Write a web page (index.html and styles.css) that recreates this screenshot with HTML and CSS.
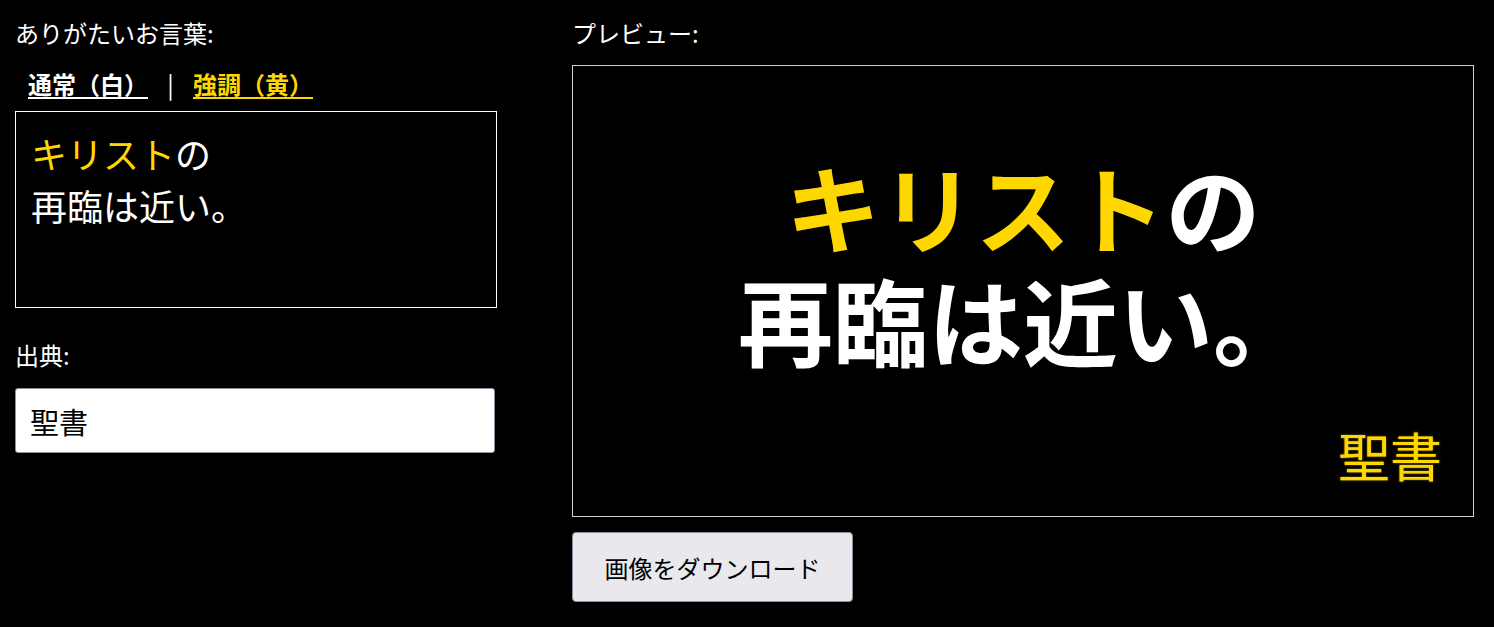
FILE: index.html
```html
<!DOCTYPE html>
<html lang="ja">
<head>
<meta charset="utf-8">
<title>ありがたいお言葉</title>
<link rel="stylesheet" href="styles.css">
</head>
<body>
<div class="app">
  <section class="editor">
    <div class="label">ありがたいお言葉:</div>
    <div class="tabs">
      <span class="tab tab-white">通常（白）</span>
      <span class="sep">|</span>
      <span class="tab tab-yellow">強調（黄）</span>
    </div>
    <div class="quote-box" contenteditable="true"><span class="hl">キリスト</span>の<br>再臨は近い。</div>
    <div class="label label-source">出典:</div>
    <input class="source-input" type="text" value="聖書">
  </section>
  <section class="preview-col">
    <div class="label label-preview">プレビュー:</div>
    <div class="preview">
      <div class="preview-text">
        <div class="line"><span class="hl">キリスト</span>の</div>
        <div class="line">再臨は近い。</div>
      </div>
      <div class="preview-source">聖書</div>
    </div>
    <button class="download" type="button">画像をダウンロード</button>
  </section>
</div>
</body>
</html>
```
FILE: styles.css
```css
html, body {
  margin: 0;
  padding: 0;
  background: #000;
}
body {
  color: #fff;
  font-family: "Noto Sans CJK JP", "Noto Sans", sans-serif;
  font-size: 24px;
}
.app {
  display: flex;
  gap: 75px;
  padding: 15px;
  align-items: flex-start;
}
.editor {
  width: 482px;
  display: flex;
  flex-direction: column;
}
.label {
  line-height: 35px;
  margin-bottom: 16px;
}
.tabs {
  display: flex;
  align-items: center;
  line-height: 35px;
  margin-bottom: 10px;
  padding-left: 13px;
}
.tab {
  font-weight: bold;
  text-decoration: underline;
  text-underline-offset: 3px;
  cursor: pointer;
}
.tab-white { color: #fff; }
.tab-yellow { color: #ffd700; }
.sep {
  width: 45px;
  text-align: center;
  color: #fff;
  font-weight: normal;
}
.quote-box {
  box-sizing: border-box;
  height: 197px;
  border: 1px solid #fff;
  padding: 15px 15px;
  font-size: 36px;
  line-height: 52px;
  color: #fff;
  outline: none;
}
.hl { color: #ffd700; }
.label-source {
  margin-top: 29px;
}
.source-input {
  box-sizing: border-box;
  width: 480px;
  height: 65px;
  border: 1px solid #8f8f9d;
  border-radius: 3px;
  background: #fff;
  color: #000;
  padding: 0 14px;
  font-family: "Noto Sans CJK JP", "Noto Sans", sans-serif;
  font-size: 29px;
  outline: none;
}
.preview-col {
  width: 902px;
  display: flex;
  flex-direction: column;
  align-items: flex-start;
}
.label-preview {
  margin-bottom: 15px;
}
.preview {
  box-sizing: border-box;
  width: 902px;
  height: 452px;
  border: 1px solid #cfcfcf;
  background: #000;
  display: flex;
  flex-direction: column;
}
.preview-text {
  padding-top: 83px;
  text-align: center;
  font-weight: bold;
  font-size: 95px;
  line-height: 113px;
  color: #fff;
}
.preview-source {
  margin-top: auto;
  align-self: flex-end;
  padding: 0 31px 24px 0;
  font-size: 52px;
  color: #ffd700;
  text-shadow: 0 0 2px rgba(255, 215, 0, 0.6);
}
.download {
  box-sizing: border-box;
  margin-top: 15px;
  width: 281px;
  height: 70px;
  background: #e9e9ed;
  border: 1px solid #8f8f9d;
  border-radius: 4px;
  color: #000;
  font-family: "Noto Sans CJK JP", "Noto Sans", sans-serif;
  font-size: 24px;
  cursor: pointer;
}
```
